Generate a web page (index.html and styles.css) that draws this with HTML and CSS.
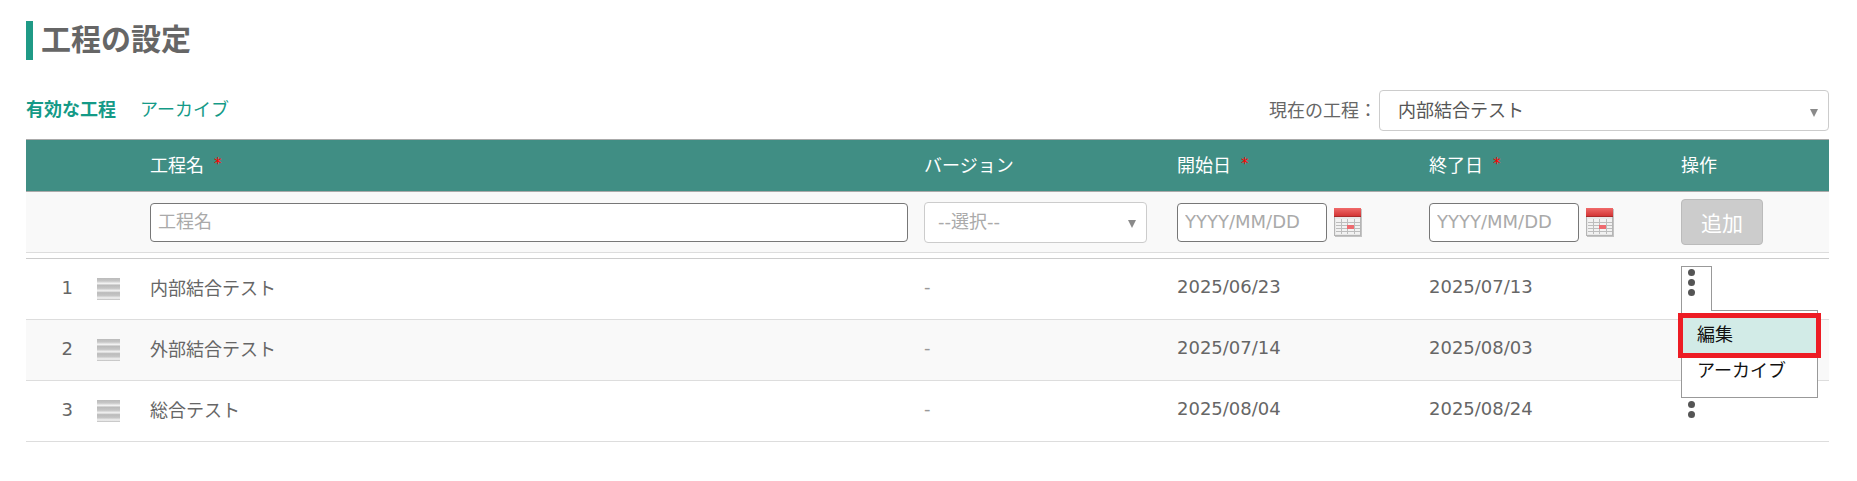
FILE: index.html
```html
<!DOCTYPE html>
<html lang="ja">
<head>
    <meta charset="UTF-8">
    <title>工程の設定</title>
    <link rel="stylesheet" href="styles.css">
</head>
<body>
<div class="page">
    <h1 class="title">工程の設定</h1>

    <div class="toolbar">
        <div class="tabs">
            <a href="#" class="current">有効な工程</a>
            <a href="#">アーカイブ</a>
        </div>
        <div class="now">
            <label for="now-select">現在の工程：</label>
            <div class="select-wrap now-wrap">
                <select id="now-select">
                    <option>内部結合テスト</option>
                    <option>外部結合テスト</option>
                    <option>総合テスト</option>
                </select>
            </div>
        </div>
    </div>

    <!--見出し-->
    <div class="row head">
        <div></div>
        <div>工程名<span class="req">*</span></div>
        <div>バージョン</div>
        <div>開始日<span class="req">*</span></div>
        <div>終了日<span class="req">*</span></div>
        <div>操作</div>
    </div>

    <!--追加フォーム-->
    <div class="row form">
        <div></div>
        <div><input type="text" class="name-input" placeholder="工程名"></div>
        <div>
            <div class="select-wrap version-wrap">
                <select class="empty">
                    <option>--選択--</option>
                </select>
            </div>
        </div>
        <div class="date">
            <input type="text" placeholder="YYYY/MM/DD">
            <svg class="cal" viewBox="0 0 28 29"><use href="#cal"></use></svg>
        </div>
        <div class="date">
            <input type="text" placeholder="YYYY/MM/DD">
            <svg class="cal" viewBox="0 0 28 29"><use href="#cal"></use></svg>
        </div>
        <div><button class="add" type="button">追加</button></div>
    </div>

    <div class="list">
        <div class="row item">
            <div class="no"><span>1</span><i class="handle"></i></div>
            <div>内部結合テスト</div>
            <div class="none">-</div>
            <div>2025/06/23</div>
            <div>2025/07/13</div>
            <div class="op">
                <div class="popup">
                    <div class="popup-tab"><span class="dots"><i></i><i></i><i></i></span></div>
                    <ul class="popup-menu">
                        <li class="marked">編集</li>
                        <li>アーカイブ</li>
                    </ul>
                </div>
            </div>
        </div>
        <div class="row item">
            <div class="no"><span>2</span><i class="handle"></i></div>
            <div>外部結合テスト</div>
            <div class="none">-</div>
            <div>2025/07/14</div>
            <div>2025/08/03</div>
            <div class="op"><span class="dots"><i></i><i></i><i></i></span></div>
        </div>
        <div class="row item">
            <div class="no"><span>3</span><i class="handle"></i></div>
            <div>総合テスト</div>
            <div class="none">-</div>
            <div>2025/08/04</div>
            <div>2025/08/24</div>
            <div class="op"><span class="dots"><i></i><i></i><i></i></span></div>
        </div>
    </div>
</div>

<svg width="0" height="0" class="defs">
    <defs>
        <linearGradient id="cal-red" x1="0" y1="0" x2="0" y2="1">
            <stop offset="0" stop-color="#f06a6a"/>
            <stop offset="1" stop-color="#cf2f2f"/>
        </linearGradient>
        <g id="cal">
            <rect x="1" y="1" width="27" height="28" fill="#c4c4c4"/>
            <rect x="0.500" y="0.500" width="26" height="27" fill="#e8e8e8" stroke="#b5b5b5" stroke-width="1"/>
            <rect x="0" y="0" width="27" height="9" fill="url(#cal-red)"/>
            <rect x="0" y="8" width="27" height="1" fill="#a92a2a"/>
            <rect x="2" y="11" width="24" height="15" fill="#f2f2f2"/>
            <path d="M2 14.500h24M2 17.500h24M2 20.500h24M2 23.500h24M7.500 11v15M13.500 11v15M20.500 11v15" stroke="#bdbdbd" stroke-width="1" fill="none"/>
            <rect x="13" y="17" width="7" height="4" fill="#ee6a6f"/>
        </g>
    </defs>
</svg>
</body>
</html>
```

FILE: styles.css
```css
* {
    margin: 0;
    padding: 0;
    box-sizing: border-box;
}

body {
    background-color: #fff;
    color: #666;
    font-family: "DejaVu Sans", "Noto Sans CJK JP", sans-serif;
    font-size: 18px;
}

ul {
    list-style: none;
}

.defs {
    position: absolute;
}

.page {
    padding: 21px 28px 0 26px;
}

.title {
    height: 39px;
    padding-left: 8px;
    border-left: 7px solid #1f9a86;
    font-size: 30px;
    line-height: 37px;
    font-weight: bold;
    color: #666;
}

.toolbar {
    display: flex;
    justify-content: space-between;
    align-items: center;
    margin-top: 30px;
    height: 41px;
}

.tabs {
    display: flex;
    gap: 24px;
    padding-bottom: 5px;
}

.tabs a {
    color: #149a87;
    text-decoration: none;
}

.tabs a.current {
    font-weight: bold;
}

.now {
    display: flex;
    align-items: center;
    gap: 2px;
}

.now label {
    padding-bottom: 4px;
}

.select-wrap {
    position: relative;
}

.select-wrap::after {
    content: "";
    position: absolute;
    right: 11px;
    top: 50%;
    margin-top: -2px;
    border-top: 8px solid #8a8a8a;
    border-left: 4px solid transparent;
    border-right: 4px solid transparent;
}

select {
    display: block;
    width: 100%;
    height: 100%;
    appearance: none;
    background-color: #fff;
    border: 1px solid #ccc;
    border-radius: 4px;
    color: #555;
    font: inherit;
}

.now-wrap {
    width: 450px;
    height: 41px;
}

.now-wrap select {
    padding-left: 18px;
}

.version-wrap {
    width: 223px;
    height: 41px;
}

.version-wrap select {
    padding: 0 0 2px 13px;
}

select.empty {
    color: #aaa;
}

.row {
    display: grid;
    grid-template-columns: 124px 774px 253px 252px 252px 148px;
    align-items: center;
}

.head {
    height: 53px;
    margin-top: 8px;
    padding-bottom: 4px;
    background-color: #408e84;
    border-top: 1px solid #aaa;
    border-bottom: 1px solid #aaa;
    color: #fff;
}

.req {
    margin-left: 10px;
    color: #f00;
    font-size: 15px;
    vertical-align: 3px;
}

.form {
    height: 61px;
    background-color: #f9f9f9;
    border-bottom: 1px solid #ddd;
}

input {
    height: 39px;
    padding: 0 7px 2px;
    border: 1px solid #777;
    border-radius: 4px;
    background-color: #fff;
    color: #555;
    font: inherit;
}

input::placeholder {
    color: #aaa;
    opacity: 1;
}

.name-input {
    width: 758px;
}

.date {
    display: flex;
    align-items: center;
    gap: 7px;
}

.date input {
    width: 150px;
}

.cal {
    width: 28px;
    height: 29px;
    overflow: visible;
}

.add {
    display: block;
    width: 82px;
    height: 46px;
    background-color: #ccc;
    border: 1px solid #bbb;
    border-radius: 4px;
    color: #fff;
    font: inherit;
    font-size: 21px;
}

.list {
    margin-top: 5px;
    border-top: 1px solid #ccc;
}

.item {
    height: 61px;
    border-bottom: 1px solid #ddd;
}

.item > div {
    padding-bottom: 5px;
}

.item:nth-child(even) {
    background-color: #f9f9f9;
}

.no {
    display: flex;
    align-items: center;
}

.no span {
    width: 71px;
    padding: 2px 24px 0 0;
    text-align: right;
}

.handle {
    width: 23px;
    height: 22px;
    margin-top: 4px;
    background: repeating-linear-gradient(to bottom, #bbb 0, #c6c6c6 3px, #ececec 5px, #f2f2f2 5.500px, #bbb 7.330px);
}

.none {
    color: #999;
}

.item > .op {
    align-self: start;
    position: relative;
    padding-bottom: 0;
}

.dots {
    display: flex;
    flex-direction: column;
    gap: 3px;
    margin: 10px 0 0 7px;
}

.dots i {
    width: 7px;
    height: 7px;
    border-radius: 50%;
    background-color: #555;
}

.popup {
    position: absolute;
    left: 0;
    top: 7px;
    z-index: 2;
}

.popup-tab {
    position: relative;
    z-index: 1;
    width: 31px;
    height: 45px;
    background-color: #fff;
    border: 1px solid #999;
    border-bottom: 0;
}

.popup-tab .dots {
    margin: 2px 0 0 6px;
}

.popup-menu {
    width: 137px;
    height: 88px;
    margin-top: -1px;
    padding-top: 2px;
    background-color: #fff;
    border: 1px solid #999;
    color: #111;
}

.popup-menu li {
    height: 44px;
    padding-left: 15px;
    line-height: 34px;
}

.popup-menu li.marked {
    width: 143px;
    height: 45px;
    margin-left: -4px;
    padding-left: 14px;
    background-color: #d2ebe7;
    border: 5px solid #ed1c24;
}

.popup-menu li:last-child {
    line-height: 26px;
}
```
